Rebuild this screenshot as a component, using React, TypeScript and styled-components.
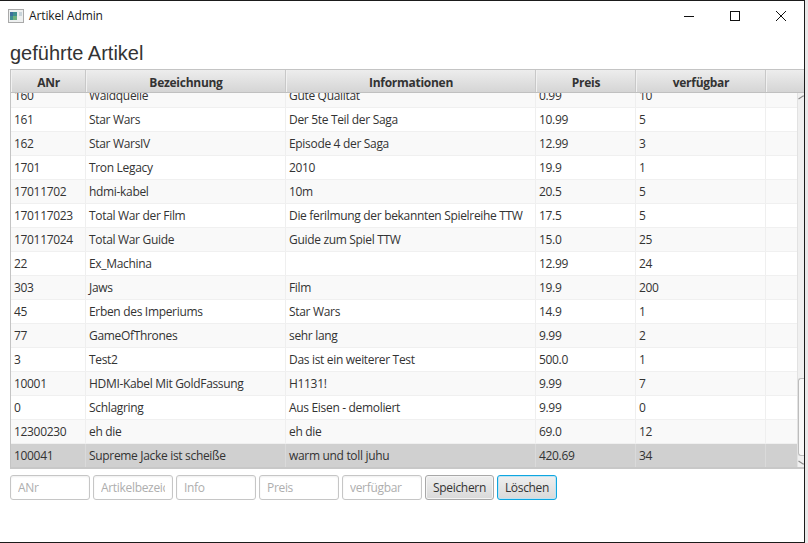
import React from "react";
import styled, { createGlobalStyle } from "styled-components";

const Global = createGlobalStyle`
  html, body { margin: 0; padding: 0; background: #e9e9e9; }
  #root { width: 808px; height: 543px; overflow: hidden; }
  * { box-sizing: border-box; }
`;

const Desktop = styled.div`
  width: 808px;
  height: 543px;
  overflow: hidden;
  background: #e9e9e9;
`;

const Win = styled.div`
  width: 805px;
  height: 543px;
  background: #fff;
  border-top: 1px solid #1b1b1b;
  border-right: 1px solid #1b1b1b;
  border-bottom: 1px solid #1b1b1b;
  display: flex;
  flex-direction: column;
  overflow: hidden;
  font-family: "Open Sans", "Noto Sans", sans-serif;
`;

const TitleBar = styled.div`
  height: 29px;
  flex: none;
  display: flex;
  align-items: center;
  padding-left: 8px;
`;

const AppIcon = styled.svg`
  width: 16px;
  height: 14px;
  flex: none;
`;

const TitleText = styled.div`
  margin-left: 5px;
  font-size: 12px;
  color: #1a1a1a;
  font-family: "Open Sans", sans-serif;
  letter-spacing: -0.12px;
`;

const WinControls = styled.div`
  margin-left: auto;
  display: flex;
`;

const WinButton = styled.div`
  width: 46px;
  height: 29px;
  display: flex;
  align-items: center;
  justify-content: center;
`;

const Heading = styled.h1`
  margin: 10px 0 0 10px;
  height: 29px;
  font: 400 20px/27px "Liberation Sans", Arial, sans-serif;
  color: #333;
  flex: none;
`;

const TableBox = styled.div`
  flex: none;
  margin-left: 10px;
  height: 400px;
  border: 1px solid #c4c4c4;
  border-right: none;
  border-bottom: 2px solid #c8c8c8;
  display: flex;
  flex-direction: column;
  overflow: hidden;
`;

const HeaderRow = styled.div`
  flex: none;
  display: flex;
  height: 23px;
  background: linear-gradient(#ededed, #d5d5d5);
  border-bottom: 1px solid #c0c0c0;
`;

const HeaderCell = styled.div<{ $w: number }>`
  width: ${(p) => p.$w}px;
  flex: none;
  border-right: 1px solid #c8c8c8;
  border-left: 1px solid #f1f1f1;
  font-size: 12px;
  font-weight: 700;
  color: #333;
  line-height: 26px;
  text-align: center;
  letter-spacing: -0.27px;
`;

const Filler = styled.div`
  flex: 1;
  border-left: 1px solid #f1f1f1;
`;

const BodyArea = styled.div`
  flex: 1;
  display: flex;
  min-height: 0;
  overflow: hidden;
`;

const Rows = styled.div`
  flex: 1;
  min-width: 0;
  overflow: hidden;
`;

const RowList = styled.div`
  margin-top: -9px;
`;

const Row = styled.div<{ $alt: boolean; $selected: boolean }>`
  display: flex;
  height: 24px;
  background: ${(p) => (p.$selected ? "#d0d0d0" : p.$alt ? "#f9f9f9" : "#fff")};
  border-bottom: 1px solid ${(p) => (p.$selected ? "#d8d8d8" : "#f0f0f0")};
`;

const Cell = styled.div<{ $w: number; $selected: boolean }>`
  width: ${(p) => p.$w}px;
  flex: none;
  padding-left: 3px;
  border-right: 1px solid ${(p) => (p.$selected ? "#dadada" : "#efefef")};
  font-size: 12px;
  line-height: 24px;
  color: #333;
  white-space: nowrap;
  overflow: hidden;
  letter-spacing: -0.32px;
`;

const Scrollbar = styled.div`
  flex: none;
  width: 7px;
  background: #f0f0f0;
  border-left: 1px solid #e2e2e2;
  position: relative;
`;

const Thumb = styled.div`
  position: absolute;
  left: 0;
  top: 285px;
  width: 7px;
  height: 78px;
  background: #f8f8f8;
  border: 1px solid #bdbdbd;
  border-right: none;
  border-radius: 3px 0 0 3px;
`;

const Arrow = styled.svg<{ $top: number }>`
  position: absolute;
  left: 0;
  top: ${(p) => p.$top}px;
  width: 6px;
  height: 5px;
`;

const FormRow = styled.div`
  flex: none;
  display: flex;
  gap: 3px;
  margin: 6px 0 0 10px;
  height: 25px;
`;

const Field = styled.input`
  width: 80px;
  height: 25px;
  padding: 0 7px;
  border: 1px solid #c6c6c6;
  border-radius: 3px;
  background: #fff;
  box-shadow: inset 0 1px 2px #efefef;
  font: 400 12px "Open Sans", sans-serif;
  letter-spacing: -0.32px;
  outline: none;
  &::placeholder { color: #aeaeae; opacity: 1; }
`;

const Btn = styled.button<{ $focused?: boolean; $w: number }>`
  width: ${(p) => p.$w}px;
  height: 25px;
  padding: 0;
  font: 400 12px "Open Sans", sans-serif;
  letter-spacing: -0.32px;
  color: #333;
  border-radius: 3px;
  background: linear-gradient(#efefef, #d9d9d9);
  border: 1px solid ${(p) => (p.$focused ? "#0fa6e0" : "#a8a8a8")};
  box-shadow: ${(p) => (p.$focused ? "inset 0 0 0 1px #bfe3f2" : "inset 0 0 0 1px #f4f4f4")};
`;

const cols = [75, 200, 250, 100, 130];
const heads = ["ANr", "Bezeichnung", "Informationen", "Preis", "verfügbar"];
const data: string[][] = [
  ["160", "Waldquelle", "Gute Qualität", "0.99", "10"],
  ["161", "Star Wars", "Der 5te Teil der Saga", "10.99", "5"],
  ["162", "Star WarsIV", "Episode 4 der Saga", "12.99", "3"],
  ["1701", "Tron Legacy", "2010", "19.9", "1"],
  ["17011702", "hdmi-kabel", "10m", "20.5", "5"],
  ["170117023", "Total War der Film", "Die ferilmung der bekannten Spielreihe TTW", "17.5", "5"],
  ["170117024", "Total War Guide", "Guide zum Spiel TTW", "15.0", "25"],
  ["22", "Ex_Machina", "", "12.99", "24"],
  ["303", "Jaws", "Film", "19.9", "200"],
  ["45", "Erben des Imperiums", "Star Wars", "14.9", "1"],
  ["77", "GameOfThrones", "sehr lang", "9.99", "2"],
  ["3", "Test2", "Das ist ein weiterer Test", "500.0", "1"],
  ["10001", "HDMI-Kabel Mit GoldFassung", "H1131!", "9.99", "7"],
  ["0", "Schlagring", "Aus Eisen - demoliert", "9.99", "0"],
  ["12300230", "eh die", "eh die", "69.0", "12"],
  ["100041", "Supreme Jacke ist scheiße", "warm und toll juhu", "420.69", "34"],
];

export default function App() {
  return (
    <Desktop>
      <Global />
      <Win>
        <TitleBar>
          <AppIcon viewBox="0 0 16 14">
            <rect x="0.5" y="0.5" width="15" height="13" fill="#eef0f0" stroke="#a9a9a9" />
            <rect x="2" y="3" width="7" height="8" fill="#3f8f8f" />
            <rect x="2" y="3" width="3" height="4" fill="#3c6f9c" />
            <rect x="5" y="7" width="4" height="4" fill="#6fb07f" />
            <rect x="11" y="3" width="3" height="4" fill="#c9d4da" />
          </AppIcon>
          <TitleText>Artikel Admin</TitleText>
          <WinControls>
            <WinButton>
              <svg width="10" height="10" viewBox="0 0 10 10">
                <path d="M0 5.5H10" stroke="#111" strokeWidth="1" />
              </svg>
            </WinButton>
            <WinButton>
              <svg width="10" height="10" viewBox="0 0 10 10">
                <rect x="0.5" y="0.5" width="9" height="9" fill="none" stroke="#111" />
              </svg>
            </WinButton>
            <WinButton>
              <svg width="10" height="10" viewBox="0 0 10 10">
                <path d="M0 0L10 10M10 0L0 10" stroke="#111" strokeWidth="1" />
              </svg>
            </WinButton>
          </WinControls>
        </TitleBar>
        <Heading>geführte Artikel</Heading>
        <TableBox>
          <HeaderRow>
            {heads.map((h, i) => (
              <HeaderCell key={h} $w={cols[i]}>{h}</HeaderCell>
            ))}
            <Filler />
          </HeaderRow>
          <BodyArea>
            <Rows>
              <RowList>
                {data.map((row, r) => {
                  const selected = r === data.length - 1;
                  return (
                    <Row key={row[0]} $alt={r % 2 === 0} $selected={selected}>
                      {row.map((c, i) => (
                        <Cell key={i} $w={cols[i]} $selected={selected}>{c}</Cell>
                      ))}
                      <Cell $w={32} $selected={selected} />
                    </Row>
                  );
                })}
              </RowList>
            </Rows>
            <Scrollbar>
              <Arrow $top={2} viewBox="0 0 6 5">
                <path d="M0.5 4L5 1H6" fill="none" stroke="#8a8a8a" strokeWidth="1.2" />
              </Arrow>
              <Thumb />
              <Arrow $top={367} viewBox="0 0 6 5">
                <path d="M0.5 1L5 4H6" fill="none" stroke="#8a8a8a" strokeWidth="1.2" />
              </Arrow>
            </Scrollbar>
          </BodyArea>
        </TableBox>
        <FormRow>
          <Field placeholder="ANr" />
          <Field placeholder="Artikelbezeichnung" />
          <Field placeholder="Info" />
          <Field placeholder="Preis" />
          <Field placeholder="verfügbar" />
          <Btn $w={69}>Speichern</Btn>
          <Btn $w={60} $focused>Löschen</Btn>
        </FormRow>
      </Win>
    </Desktop>
  );
}
